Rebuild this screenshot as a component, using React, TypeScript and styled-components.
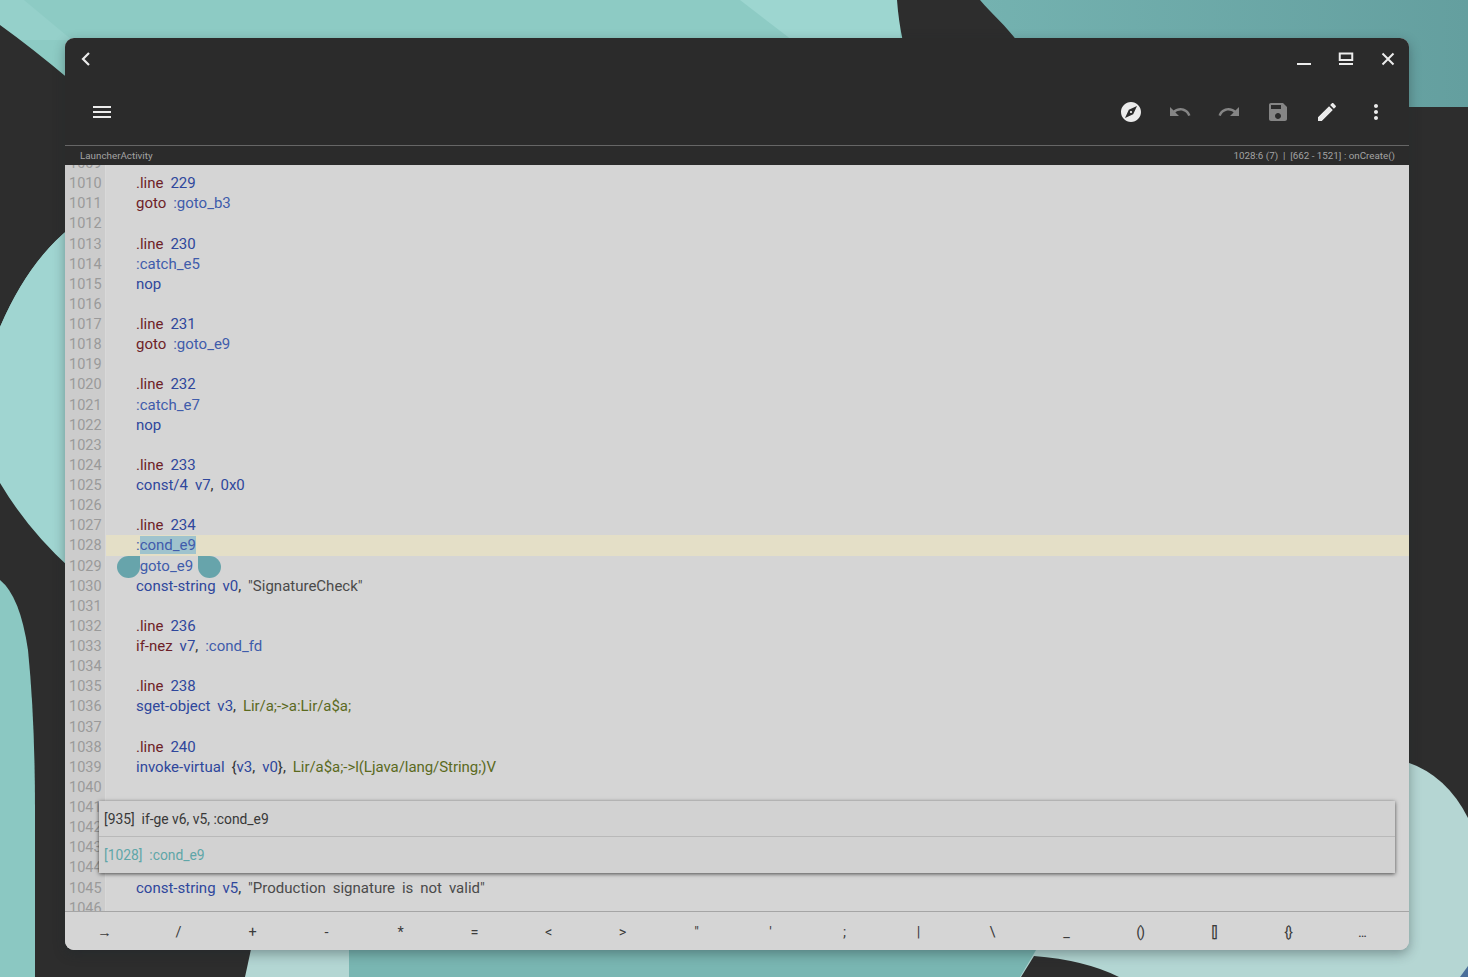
import React from "react";
import styled, { createGlobalStyle } from "styled-components";

const Global = createGlobalStyle`
  html, body { margin: 0; padding: 0; background: #2d2d2d; overflow: hidden; }
  #root { height: 100vh; }
`;

const Page = styled.div`
  position: relative;
  height: 100vh;
  box-sizing: border-box;
  padding: 38px 59px 27px 65px;
  font-family: Roboto, "Liberation Sans", sans-serif;
`;

const WallpaperSvg = styled.svg`
  position: absolute;
  inset: 0;
  width: 100%;
  height: 100%;
`;

const Window = styled.div`
  position: relative;
  height: 100%;
  display: flex;
  flex-direction: column;
  border-radius: 9px;
  overflow: hidden;
  background: #d5d5d5;
  box-shadow: 0 4px 12px rgba(30, 40, 45, 0.38);
`;

const TitleBar = styled.div`
  height: 42px;
  flex: none;
  display: flex;
  align-items: center;
  justify-content: space-between;
  padding: 0 5px 0 9px;
  background: #2b2b2b;
`;

const Controls = styled.div`
  display: flex;
  gap: 10px;
`;

const IconSlot = styled.div<{ $w: number }>`
  width: ${(p) => p.$w}px;
  height: 32px;
  display: flex;
  align-items: center;
  justify-content: center;
`;

const ToolBar = styled.div`
  height: 66px;
  flex: none;
  display: flex;
  align-items: center;
  justify-content: space-between;
  box-sizing: border-box;
  padding: 0 9px 2px 13px;
  background: #2b2b2b;
  border-bottom: 1px solid #666;
`;

const ToolGroup = styled.div`
  display: flex;
`;

const ToolButton = styled.div<{ $dim?: boolean }>`
  width: 49px;
  height: 48px;
  display: flex;
  align-items: center;
  justify-content: center;
  color: ${(p) => (p.$dim ? "#858585" : "#ebebeb")};
`;

const MenuButton = styled.div`
  width: 48px;
  height: 48px;
  display: flex;
  align-items: center;
  justify-content: center;
  color: #ebebeb;
`;

const StatusBar = styled.div`
  height: 19px;
  flex: none;
  display: flex;
  align-items: center;
  justify-content: space-between;
  padding: 0 14px 1px 15px;
  box-sizing: border-box;
  background: #2b2b2b;
  color: #a3a3a3;
  font-size: 9.8px;
  white-space: pre;
`;

const Editor = styled.div`
  position: relative;
  flex: 1;
  min-height: 0;
  overflow: hidden;
  background: #d5d5d5;
`;

const Lines = styled.div`
  margin-top: -12px;
  white-space: pre;
`;

const Row = styled.div`
  display: flex;
  height: 20.14px;
`;

const Num = styled.div`
  flex: none;
  width: 36px;
  padding-left: 4px;
  font-size: 14.5px;
  line-height: 22.14px;
  background: #cccccc;
  border-right: 1px solid #d9d9d9;
  color: #9a9a9a;
`;

const Code = styled.div<{ $current?: boolean }>`
  position: relative;
  flex: 1;
  padding-left: 30px;
  font-size: 15px;
  line-height: 20.14px;
  word-spacing: 3.2px;
  background: ${(p) => (p.$current ? "#e4dfc7" : "transparent")};
`;

const Tok = styled.span<{ $k: string }>`
  color: ${(p) =>
    ({
      d: "#6d1f28",
      b: "#2f479c",
      l: "#3f5cab",
      t: "#5b6a1e",
      s: "#4a4a4a",
      p: "#333",
    })[p.$k] ?? "#333"};
  letter-spacing: ${(p) => (p.$k === "t" ? "-0.05px" : "normal")};
`;

const Selected = styled.span`
  background: #9fc3cd;
  color: #3f5cab;
`;

const Handle = styled.span<{ $side: "l" | "r" }>`
  position: absolute;
  top: 0;
  width: 23px;
  height: 22px;
  background: #67a4ab;
  left: ${(p) => (p.$side === "l" ? "11px" : "92px")};
  border-radius: ${(p) =>
    p.$side === "l" ? "50% 0 50% 50%" : "0 50% 50% 50%"};
`;

const Popup = styled.div`
  position: absolute;
  left: 34px;
  right: 14px;
  top: 636px;
  height: 72px;
  display: flex;
  flex-direction: column;
  background: #d2d2d2;
  box-shadow: 0 1px 4px rgba(0, 0, 0, 0.65);
  font-size: 13.85px;
  white-space: pre;
`;

const PopupRow = styled.div<{ $active?: boolean }>`
  height: ${(p) => (p.$active ? "37px" : "35px")};
  box-sizing: border-box;
  display: flex;
  align-items: center;
  padding-left: 5px;
  color: ${(p) => (p.$active ? "#5fa6a8" : "#383838")};
  & + & {
    border-top: 1px solid #b9b9b9;
  }
`;

const KeyBar = styled.div`
  height: 39px;
  flex: none;
  box-sizing: border-box;
  display: flex;
  padding-left: 2px;
  background: #d5d5d5;
  border-top: 1px solid #a5a5a5;
`;

const Key = styled.div`
  width: 74px;
  display: flex;
  align-items: center;
  justify-content: center;
  padding-top: 3px;
  color: #3c3c3c;
  font-size: 14.5px;
  letter-spacing: -1.2px;
`;

const MaterialIcon = ({ d, size = 24 }: { d: string; size?: number }) => (
  <svg width={size} height={size} viewBox="0 0 24 24" fill="currentColor">
    <path d={d} />
  </svg>
);

const Wallpaper = () => (
  <WallpaperSvg viewBox="0 0 1468 977" preserveAspectRatio="none">
    <defs>
      <linearGradient id="tr" x1="0" x2="1" y1="0" y2="0">
        <stop offset="0" stopColor="#74b2b0" />
        <stop offset="1" stopColor="#649f9f" />
      </linearGradient>
    </defs>
    <rect width="1468" height="977" fill="#8dcbc4" />
    <path d="M0 0H24L72 40H0Z" fill="#95d0ca" />
    <path d="M740 0H900V40H792Z" fill="#9dd6d0" />
    <rect x="980" width="488" height="108" fill="url(#tr)" />
    <path d="M897 0H980C992 14 1006 26 1018 42H903C900 28 898 14 897 0Z" fill="#2d2d2d" />
    <path d="M0 25Q32 48 70 80V228Q28 262 0 327Z" fill="#2d2d2d" />
    <path d="M0 327Q28 262 70 228V568Q28 530 0 483Z" fill="#a0d5d1" />
    <path d="M0 483Q28 530 70 568V977H0Z" fill="#2d2d2d" />
    <path d="M0 580Q20 596 28 650Q35 720 35 810V977H0Z" fill="#8bc8c2" />
    <rect x="65" y="900" width="186" height="77" fill="#2d2d2d" />
    <rect x="1400" y="107" width="68" height="720" fill="#2d2d2d" />
    <path d="M1400 760Q1445 772 1468 818V977H1400Z" fill="#b5d6d3" />
    <path d="M253 940H1400V977H245Z" fill="#b3d6d3" />
    <path d="M349 940H1042L1020 977H349Z" fill="#79b6b2" />
    <path d="M1034 956Q1085 960 1119 977H1021Z" fill="#2d2d2d" />
    <path d="M1468 966V977H1460Z" fill="#4a6f9a" />
  </WallpaperSvg>
);

type T = [string, string];
const d = (s: string): T => ["d", s];
const b = (s: string): T => ["b", s];
const l = (s: string): T => ["l", s];
const t = (s: string): T => ["t", s];
const s = (v: string): T => ["s", v];
const p = (v: string): T => ["p", v];

const line = (n: string): T[] => [d(".line "), b(n)];

const code: T[][] = [
  [],
  line("229"),
  [d("goto "), l(":goto_b3")],
  [],
  line("230"),
  [l(":catch_e5")],
  [b("nop")],
  [],
  line("231"),
  [d("goto "), l(":goto_e9")],
  [],
  line("232"),
  [l(":catch_e7")],
  [b("nop")],
  [],
  line("233"),
  [b("const/4 v7"), p(", "), b("0x0")],
  [],
  line("234"),
  [l(":")],
  [l(":goto_e9")],
  [b("const-string v0"), p(", "), s('"SignatureCheck"')],
  [],
  line("236"),
  [d("if-nez "), b("v7"), p(", "), l(":cond_fd")],
  [],
  line("238"),
  [b("sget-object v3"), p(", "), t("Lir/a;->a:Lir/a$a;")],
  [],
  line("240"),
  [b("invoke-virtual "), p("{"), b("v3"), p(", "), b("v0"), p("}, "), t("Lir/a$a;->l(Ljava/lang/String;)V")],
  [],
  line("242"),
  [],
  [],
  [],
  [b("const-string v5"), p(", "), s('"Production signature is not valid"')],
  [],
];

const keys = ["→", "/", "+", "-", "*", "=", "<", ">", '"', "'", ";", "|", "\\", "_", "()", "[]", "{}", "..."];

const tools: { path: string; dim?: boolean }[] = [
  { path: "M12 10.9c-.61 0-1.1.49-1.1 1.1s.49 1.1 1.1 1.1c.61 0 1.1-.49 1.1-1.1s-.49-1.1-1.1-1.1zM12 2C6.48 2 2 6.48 2 12s4.48 10 10 10 10-4.48 10-10S17.52 2 12 2zm2.19 12.19L6 18l3.81-8.19L18 6l-3.81 8.19z" },
  { path: "M12.5 8c-2.65 0-5.05.99-6.9 2.6L2 7v9h9l-3.62-3.62c1.39-1.16 3.16-1.88 5.12-1.88 3.54 0 6.55 2.31 7.6 5.5l2.37-.78C21.08 11.03 17.15 8 12.5 8z", dim: true },
  { path: "M18.4 10.6C16.55 8.99 14.15 8 11.5 8c-4.65 0-8.58 3.03-9.96 7.22L3.9 16c1.05-3.19 4.05-5.5 7.6-5.5 1.95 0 3.73.72 5.12 1.88L13 16h9V7l-3.6 3.6z", dim: true },
  { path: "M17 3H5c-1.11 0-2 .9-2 2v14c0 1.1.89 2 2 2h14c1.1 0 2-.9 2-2V7l-4-4zm-5 16c-1.66 0-3-1.34-3-3s1.34-3 3-3 3 1.34 3 3-1.34 3-3 3zm3-10H5V5h10v4z", dim: true },
  { path: "M3 17.25V21h3.75L17.81 9.94l-3.75-3.75L3 17.25zM20.71 7.04c.39-.39.39-1.02 0-1.41l-2.34-2.34c-.39-.39-1.02-.39-1.41 0l-1.83 1.83 3.75 3.75 1.83-1.83z" },
  { path: "M12 8c1.1 0 2-.9 2-2s-.9-2-2-2-2 .9-2 2 .9 2 2 2zm0 2c-1.1 0-2 .9-2 2s.9 2 2 2 2-.9 2-2-.9-2-2-2zm0 6c-1.1 0-2 .9-2 2s.9 2 2 2 2-.9 2-2-.9-2-2-2z" },
];

export default function App() {
  return (
    <>
      <Global />
      <Page>
        <Wallpaper />
        <Window>
          <TitleBar>
            <IconSlot $w={24}>
              <svg width="14" height="16" viewBox="0 0 14 16" fill="none" stroke="#ececec" strokeWidth="2.2">
                <path d="M10 2 4 8l6 6" />
              </svg>
            </IconSlot>
            <Controls>
              <IconSlot $w={32}>
                <svg width="16" height="16" viewBox="0 0 16 16" fill="#ececec">
                  <rect x="1" y="12" width="14" height="2" />
                </svg>
              </IconSlot>
              <IconSlot $w={32}>
                <svg width="16" height="16" viewBox="0 0 16 16" fill="none" stroke="#ececec">
                  <rect x="1.75" y="2.5" width="12.5" height="6.5" strokeWidth="2" />
                  <path d="M1 13h14" strokeWidth="2" />
                </svg>
              </IconSlot>
              <IconSlot $w={32}>
                <svg width="16" height="16" viewBox="0 0 16 16" fill="none" stroke="#ececec" strokeWidth="2">
                  <path d="M2.5 2.5l11 11M13.5 2.5l-11 11" />
                </svg>
              </IconSlot>
            </Controls>
          </TitleBar>
          <ToolBar>
            <MenuButton>
              <MaterialIcon d="M3 18h18v-2H3v2zm0-5h18v-2H3v2zm0-7v2h18V6H3z" />
            </MenuButton>
            <ToolGroup>
              {tools.map((tool) => (
                <ToolButton key={tool.path} $dim={tool.dim}>
                  <MaterialIcon d={tool.path} />
                </ToolButton>
              ))}
            </ToolGroup>
          </ToolBar>
          <StatusBar>
            <span>LauncherActivity</span>
            <span>1028:6 (7)  |  [662 - 1521] : onCreate()</span>
          </StatusBar>
          <Editor>
            <Lines>
              {code.map((tokens, i) => (
                <Row key={i}>
                  <Num>{1009 + i}</Num>
                  <Code $current={i === 19}>
                    {tokens.map(([k, v], j) => (
                      <Tok key={j} $k={k}>
                        {v}
                      </Tok>
                    ))}
                    {i === 19 && <Selected>cond_e9</Selected>}
                    {i === 20 && (
                      <>
                        <Handle $side="l" />
                        <Handle $side="r" />
                      </>
                    )}
                  </Code>
                </Row>
              ))}
            </Lines>
            <Popup>
              <PopupRow>[935]  if-ge v6, v5, :cond_e9</PopupRow>
              <PopupRow $active>[1028]  :cond_e9</PopupRow>
            </Popup>
          </Editor>
          <KeyBar>
            {keys.map((k) => (
              <Key key={k}>{k}</Key>
            ))}
          </KeyBar>
        </Window>
      </Page>
    </>
  );
}
